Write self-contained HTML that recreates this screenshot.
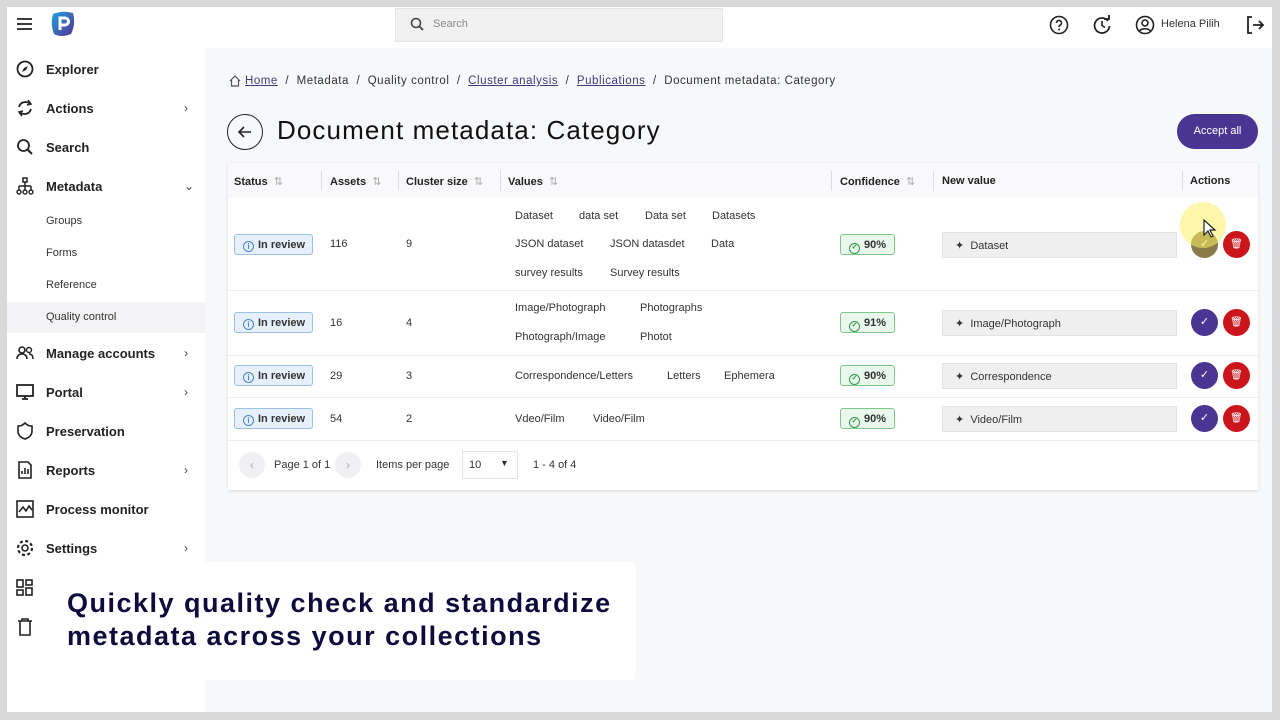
<!DOCTYPE html>
<html><head><meta charset="utf-8"><style>
*{box-sizing:border-box;margin:0;padding:0}
body{width:1280px;height:720px;background:#d9d9d9;font-family:"Liberation Sans",sans-serif;color:#222;position:relative;overflow:hidden}
.a{position:absolute}
.frame{left:7px;top:7px;width:1265px;height:705px;background:#f7f8fa}
.hdr{left:7px;top:7px;width:1265px;height:41px;background:#fff}
.side{left:7px;top:48px;width:198px;height:664px;background:#fff}
.nav{font-size:13px;font-weight:bold;color:#222;left:46px}
.sub{font-size:11px;color:#333;left:46px}
.ico{left:16px;width:18px;height:18px}
.chev{left:184px;font-size:12px;color:#444}
.t{font-size:11px;color:#333}
.th{font-size:11px;font-weight:bold;color:#222}
.chip{font-size:11px;color:#333}
.rev{width:79px;height:21px;border:1px solid #9cc0e6;background:#e6f0fb;border-radius:3px;font-size:11px;font-weight:bold;color:#333;padding:4px 0 0 8px}
.rev i{display:inline-block;width:11px;height:11px;border:1px solid #4b85c9;border-radius:50%;vertical-align:-1px;margin-right:4px;font-size:8px;font-style:normal;text-align:center;line-height:9px;color:#4b85c9}
.conf{width:55px;height:21px;border:1px solid #7ac98a;background:#e9f7ec;border-radius:3px;font-size:11px;font-weight:bold;color:#333;padding:4px 0 0 8px}
.conf i{display:inline-block;width:11px;height:11px;border:1.3px solid #2e9a47;border-radius:50%;vertical-align:-1px;margin-right:4px;font-size:7px;font-style:normal;text-align:center;line-height:8px;color:#2e9a47}
.nv{left:942px;width:235px;height:26px;background:#efefef;border:1px solid #e2e2e2;font-size:11px;color:#333;padding:6px 0 0 12px}
.ok{width:27px;height:27px;border-radius:50%;background:#4a3592;color:#fff;font-size:11px;text-align:center;line-height:27px}
.del{width:27px;height:27px;border-radius:50%;background:#c9151b;color:#fff;font-size:10px;text-align:center;line-height:27px}
.sep{width:1px;height:20px;background:#ddd;top:171px}
.line{left:228px;width:1030px;height:1px;background:#eee}
</style></head><body>
<div class="a frame"></div>
<div class="a hdr"></div>
<div class="a side"></div>
<!-- header -->
<svg class="a" style="left:16px;top:16px" width="18" height="16"><path d="M1 3h15M1 8h15M1 13h15" stroke="#222" stroke-width="1.8"/></svg>
<svg class="a" style="left:49px;top:10px" width="28" height="28"><defs><linearGradient id="g" x1="0" y1="0" x2="1" y2="1"><stop offset="0" stop-color="#1ba4e0"/><stop offset="1" stop-color="#5a2d91"/></linearGradient></defs><path d="M4 4Q14 0 24 3Q27 14 22 24Q12 28 5 24Q1 14 4 4Z" fill="url(#g)"/><path d="M11 20V8h5a3.5 3.5 0 0 1 0 7h-5" stroke="#fff" stroke-width="3" fill="none"/></svg>
<div class="a" style="left:395px;top:8px;width:328px;height:34px;background:#f1f1f1;border:1px solid #e4e4e4"></div>
<svg class="a" style="left:410px;top:17px" width="14" height="14"><circle cx="6" cy="6" r="4.5" stroke="#444" stroke-width="1.6" fill="none"/><path d="M9.5 9.5L13 13" stroke="#444" stroke-width="1.8"/></svg>
<div class="a t" style="left:433px;top:18px;color:#888">Search</div>
<svg class="a" style="left:1049px;top:15px" width="20" height="20"><circle cx="10" cy="10" r="8.5" stroke="#222" stroke-width="1.6" fill="none"/><path d="M7.5 8a2.5 2.5 0 1 1 3.5 2.2c-.8.4-1 .9-1 1.8" stroke="#222" stroke-width="1.6" fill="none"/><circle cx="10" cy="14.5" r="1" fill="#222"/></svg>
<svg class="a" style="left:1092px;top:15px" width="20" height="20"><path d="M16 6A7.5 7.5 0 1 0 17.5 11" stroke="#222" stroke-width="1.8" fill="none"/><path d="M12 4h5V0" stroke="#222" stroke-width="1.8" fill="none"/><path d="M10 6v4.5l3 2" stroke="#222" stroke-width="1.6" fill="none"/></svg>
<svg class="a" style="left:1135px;top:15px" width="20" height="20"><circle cx="10" cy="10" r="8.5" stroke="#222" stroke-width="1.6" fill="none"/><circle cx="10" cy="8" r="3" stroke="#222" stroke-width="1.6" fill="none"/><path d="M4.5 16c2-3 9-3 11 0" stroke="#222" stroke-width="1.6" fill="none"/></svg>
<div class="a t" style="left:1161px;top:18px;color:#333">Helena Pilih</div>
<svg class="a" style="left:1245px;top:15px" width="20" height="20"><path d="M7 2H3v16h4" stroke="#222" stroke-width="1.8" fill="none"/><path d="M8 10h10M14 6l4 4-4 4" stroke="#222" stroke-width="1.8" fill="none"/></svg>
<!-- sidebar -->
<svg class="a ico" style="top:60px"><circle cx="9" cy="9" r="7.5" stroke="#222" stroke-width="1.8" fill="none"/><path d="M12 6l-2 4-4 2 2-4z" fill="#222"/></svg>
<div class="a nav" style="top:62px">Explorer</div>
<svg class="a ico" style="top:99px"><path d="M14 5A6.5 6.5 0 0 0 3 8M4 13a6.5 6.5 0 0 0 11-3" stroke="#222" stroke-width="1.8" fill="none"/><path d="M12 1l3 4-4 1M6 17l-3-4 4-1" stroke="#222" stroke-width="1.5" fill="none"/></svg>
<div class="a nav" style="top:101px">Actions</div><div class="a chev" style="top:101px">›</div>
<svg class="a ico" style="top:138px"><circle cx="7.5" cy="7.5" r="5.5" stroke="#222" stroke-width="1.8" fill="none"/><path d="M11.5 11.5L16 16" stroke="#222" stroke-width="2"/></svg>
<div class="a nav" style="top:140px">Search</div>
<svg class="a ico" style="top:177px"><rect x="7" y="1" width="4" height="4" stroke="#222" stroke-width="1.5" fill="none"/><path d="M9 5v4M3 9h12M3 9v4M9 9v4M15 9v4" stroke="#222" stroke-width="1.5" fill="none"/><circle cx="3" cy="15" r="2" stroke="#222" stroke-width="1.4" fill="none"/><circle cx="9" cy="15" r="2" stroke="#222" stroke-width="1.4" fill="none"/><circle cx="15" cy="15" r="2" stroke="#222" stroke-width="1.4" fill="none"/></svg>
<div class="a nav" style="top:179px">Metadata</div><div class="a chev" style="top:179px">⌄</div>
<div class="a sub" style="top:215px">Groups</div>
<div class="a sub" style="top:247px">Forms</div>
<div class="a sub" style="top:279px">Reference</div>
<div class="a" style="left:7px;top:302px;width:198px;height:31px;background:#f3f3f5"></div>
<div class="a sub" style="top:311px">Quality control</div>
<svg class="a ico" style="top:344px"><circle cx="6" cy="6" r="3" stroke="#222" stroke-width="1.6" fill="none"/><path d="M1 15c0-3 2-5 5-5s5 2 5 5" stroke="#222" stroke-width="1.6" fill="none"/><circle cx="13" cy="6" r="2.5" stroke="#222" stroke-width="1.4" fill="none"/><path d="M13 10c3 0 4 2 4 5" stroke="#222" stroke-width="1.4" fill="none"/></svg>
<div class="a nav" style="top:346px">Manage accounts</div><div class="a chev" style="top:346px">›</div>
<svg class="a ico" style="top:383px"><rect x="1" y="2" width="16" height="11" stroke="#222" stroke-width="1.8" fill="none"/><path d="M6 16h6M9 13v3" stroke="#222" stroke-width="1.8"/></svg>
<div class="a nav" style="top:385px">Portal</div><div class="a chev" style="top:385px">›</div>
<svg class="a ico" style="top:422px"><path d="M9 1C6 4 4 4 2 4v5c0 4 3 7 7 8 4-1 7-4 7-8V4c-2 0-4 0-7-3z" stroke="#222" stroke-width="1.6" fill="none"/></svg>
<div class="a nav" style="top:424px">Preservation</div>
<svg class="a ico" style="top:461px"><path d="M3 1h9l3 3v13H3z" stroke="#222" stroke-width="1.6" fill="none"/><path d="M6 13v-3M9 13V7M12 13v-5" stroke="#222" stroke-width="1.6"/></svg>
<div class="a nav" style="top:463px">Reports</div><div class="a chev" style="top:463px">›</div>
<svg class="a ico" style="top:500px"><rect x="1" y="1" width="16" height="16" stroke="#222" stroke-width="1.6" fill="none"/><path d="M3 12l4-5 3 4 3-5 3 4" stroke="#222" stroke-width="1.6" fill="none"/></svg>
<div class="a nav" style="top:502px">Process monitor</div>
<svg class="a ico" style="top:539px"><circle cx="9" cy="9" r="3" stroke="#222" stroke-width="1.6" fill="none"/><circle cx="9" cy="9" r="7" stroke="#222" stroke-width="2.2" stroke-dasharray="3 2.5" fill="none"/></svg>
<div class="a nav" style="top:541px">Settings</div><div class="a chev" style="top:541px">›</div>
<svg class="a ico" style="top:579px"><rect x="1" y="1" width="6" height="7" stroke="#222" stroke-width="1.6" fill="none"/><rect x="10" y="1" width="6" height="5" stroke="#222" stroke-width="1.6" fill="none"/><rect x="1" y="11" width="6" height="5" stroke="#222" stroke-width="1.6" fill="none"/><rect x="10" y="9" width="6" height="7" stroke="#222" stroke-width="1.6" fill="none"/></svg>
<svg class="a ico" style="top:618px"><path d="M2 3h14M6 3V1h6v2M4 3v14h10V3" stroke="#222" stroke-width="1.6" fill="none"/></svg>
<!-- breadcrumb -->
<svg class="a" style="left:229px;top:75px" width="12" height="12"><path d="M1 6L6 1l5 5M2.5 5v6h7V5" stroke="#555" stroke-width="1.2" fill="none"/></svg>
<div class="a t" style="left:245px;top:75px;font-size:11.5px;letter-spacing:.55px">
<span style="text-decoration:underline;color:#3d3d7a">Home</span>&nbsp; / &nbsp;Metadata&nbsp; / &nbsp;Quality control&nbsp; / &nbsp;<span style="text-decoration:underline;color:#3d3d7a">Cluster analysis</span>&nbsp; / &nbsp;<span style="text-decoration:underline;color:#3d3d7a">Publications</span>&nbsp; / &nbsp;Document metadata: Category</div>
<div class="a" style="left:227px;top:114px;width:36px;height:36px;border:1.5px solid #222;border-radius:50%"></div>
<svg class="a" style="left:237px;top:124px" width="16" height="16"><path d="M14 8H2M7 3L2 8l5 5" stroke="#222" stroke-width="1.6" fill="none"/></svg>
<div class="a" style="left:277px;top:115px;font-size:26px;letter-spacing:1.1px;color:#111">Document metadata: Category</div>
<div class="a" style="left:1177px;top:114px;width:81px;height:35px;border-radius:18px;background:#4a3592;color:#fff;font-size:11px;text-align:center;line-height:35px">Accept all</div>
<!-- table -->
<div class="a" style="left:228px;top:163px;width:1030px;height:327px;background:#fff;box-shadow:0 1px 3px rgba(0,0,0,.12)"></div>
<div class="a" style="left:228px;top:163px;width:1030px;height:35px;background:#f9f9fb"></div>
<div class="a th" style="left:234px;top:175px">Status <span style="color:#aaa;font-weight:normal">&nbsp;⇅</span></div>
<div class="a sep" style="left:321px"></div>
<div class="a th" style="left:330px;top:175px">Assets <span style="color:#aaa;font-weight:normal">&nbsp;⇅</span></div>
<div class="a sep" style="left:398px"></div>
<div class="a th" style="left:406px;top:175px">Cluster size <span style="color:#aaa;font-weight:normal">&nbsp;⇅</span></div>
<div class="a sep" style="left:500px"></div>
<div class="a th" style="left:508px;top:175px">Values <span style="color:#aaa;font-weight:normal">&nbsp;⇅</span></div>
<div class="a sep" style="left:831px"></div>
<div class="a th" style="left:840px;top:175px">Confidence <span style="color:#aaa;font-weight:normal">&nbsp;⇅</span></div>
<div class="a sep" style="left:933px"></div>
<div class="a th" style="left:942px;top:175px">New value</div>
<div class="a sep" style="left:1182px"></div>
<div class="a th" style="left:1190px;top:175px">Actions</div>
<div class="a line" style="top:290px"></div><div class="a line" style="top:355px"></div><div class="a line" style="top:397px"></div><div class="a line" style="top:440px"></div>
<!-- row1 -->
<div class="a rev" style="left:234px;top:234px"><i>i</i>In review</div>
<div class="a t" style="left:330px;top:238px">116</div><div class="a t" style="left:406px;top:238px">9</div>
<div class="a chip" style="left:515px;top:210px">Dataset</div><div class="a chip" style="left:579px;top:210px">data set</div><div class="a chip" style="left:645px;top:210px">Data set</div><div class="a chip" style="left:712px;top:210px">Datasets</div>
<div class="a chip" style="left:515px;top:238px">JSON dataset</div><div class="a chip" style="left:610px;top:238px">JSON datasdet</div><div class="a chip" style="left:711px;top:238px">Data</div>
<div class="a chip" style="left:515px;top:267px">survey results</div><div class="a chip" style="left:610px;top:267px">Survey results</div>
<div class="a conf" style="left:840px;top:234px"><i>✓</i>90%</div>
<div class="a nv" style="top:232px">✦ &nbsp;Dataset</div>
<div class="a ok" style="left:1191px;top:231px;background:#8a7a4a">✓</div><div class="a del" style="left:1223px;top:231px">🗑</div>
<div class="a" style="left:1180px;top:202px;width:46px;height:46px;border-radius:50%;background:rgba(250,240,100,.55)"></div>
<svg class="a" style="left:1203px;top:219px" width="14" height="20"><path d="M1 1v15l4-4 3 6 2-1-3-6h5z" fill="#fff" stroke="#222" stroke-width="1.2"/></svg>
<!-- row2 -->
<div class="a rev" style="left:234px;top:312px"><i>i</i>In review</div>
<div class="a t" style="left:330px;top:317px">16</div><div class="a t" style="left:406px;top:317px">4</div>
<div class="a chip" style="left:515px;top:302px">Image/Photograph</div><div class="a chip" style="left:640px;top:302px">Photographs</div>
<div class="a chip" style="left:515px;top:331px">Photograph/Image</div><div class="a chip" style="left:640px;top:331px">Photot</div>
<div class="a conf" style="left:840px;top:312px"><i>✓</i>91%</div>
<div class="a nv" style="top:310px">✦ &nbsp;Image/Photograph</div>
<div class="a ok" style="left:1191px;top:309px">✓</div><div class="a del" style="left:1223px;top:309px">🗑</div>
<!-- row3 -->
<div class="a rev" style="left:234px;top:365px"><i>i</i>In review</div>
<div class="a t" style="left:330px;top:370px">29</div><div class="a t" style="left:406px;top:370px">3</div>
<div class="a chip" style="left:515px;top:370px">Correspondence/Letters</div><div class="a chip" style="left:667px;top:370px">Letters</div><div class="a chip" style="left:724px;top:370px">Ephemera</div>
<div class="a conf" style="left:840px;top:365px"><i>✓</i>90%</div>
<div class="a nv" style="top:363px">✦ &nbsp;Correspondence</div>
<div class="a ok" style="left:1191px;top:362px">✓</div><div class="a del" style="left:1223px;top:362px">🗑</div>
<!-- row4 -->
<div class="a rev" style="left:234px;top:408px"><i>i</i>In review</div>
<div class="a t" style="left:330px;top:413px">54</div><div class="a t" style="left:406px;top:413px">2</div>
<div class="a chip" style="left:515px;top:413px">Vdeo/Film</div><div class="a chip" style="left:593px;top:413px">Video/Film</div>
<div class="a conf" style="left:840px;top:408px"><i>✓</i>90%</div>
<div class="a nv" style="top:406px">✦ &nbsp;Video/Film</div>
<div class="a ok" style="left:1191px;top:405px">✓</div><div class="a del" style="left:1223px;top:405px">🗑</div>
<!-- pagination -->
<div class="a" style="left:239px;top:452px;width:26px;height:26px;border-radius:50%;background:#f0f0f2;color:#aaa;font-size:12px;text-align:center;line-height:26px">‹</div>
<div class="a t" style="left:274px;top:459px">Page 1 of 1</div>
<div class="a" style="left:335px;top:452px;width:26px;height:26px;border-radius:50%;background:#f0f0f2;color:#aaa;font-size:12px;text-align:center;line-height:26px">›</div>
<div class="a t" style="left:376px;top:459px">Items per page</div>
<div class="a" style="left:462px;top:451px;width:56px;height:28px;border:1px solid #e4e4e4"></div>
<div class="a t" style="left:469px;top:459px">10</div><div class="a t" style="left:500px;top:458px;font-size:9px">▼</div>
<div class="a t" style="left:533px;top:459px">1 - 4 of 4</div>
<!-- overlay -->
<div class="a" style="left:38px;top:562px;width:598px;height:118px;background:rgba(255,255,255,.93);border-radius:6px"></div>
<div class="a" style="left:67px;top:587px;font-size:27px;font-weight:bold;color:#0f0c3d;line-height:33px;letter-spacing:1.5px;white-space:nowrap">Quickly quality check and standardize<br>metadata across your collections</div>
</body></html>
